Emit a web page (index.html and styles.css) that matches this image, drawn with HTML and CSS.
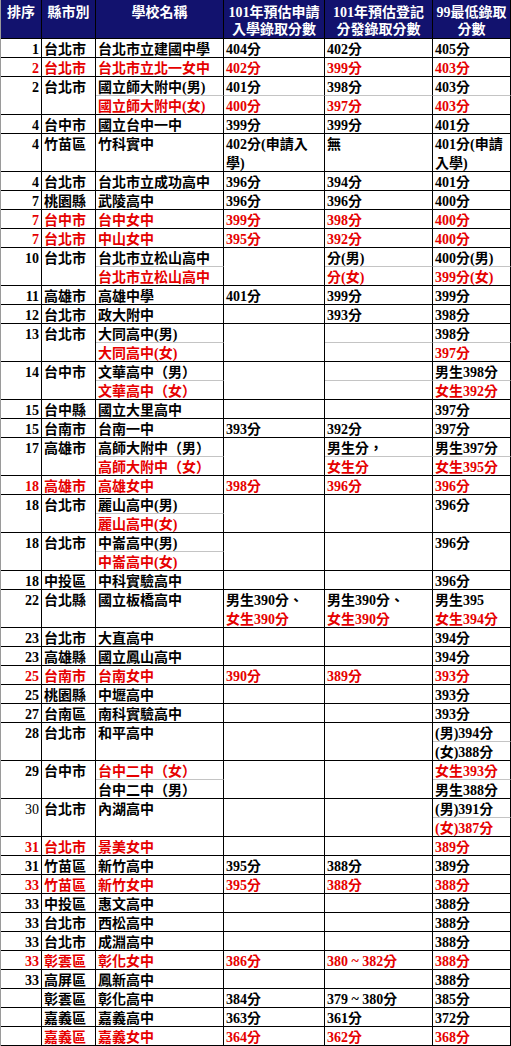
FILE: index.html
```html
<!DOCTYPE html>
<html lang="zh-Hant">
<head>
<meta charset="utf-8">
<title>高中錄取分數</title>
<link rel="stylesheet" href="styles.css">
</head>
<body>
<table class="sheet">
  <thead>
    <tr>
      <th class="c1">排序</th>
      <th class="c2">縣市別</th>
      <th class="c3">學校名稱</th>
      <th class="c4">101年預估申請<br>入學錄取分數</th>
      <th class="c5">101年預估登記<br>分發錄取分數</th>
      <th class="c6">99最低錄取<br>分數</th>
    </tr>
  </thead>
  <tbody>
    <tr><td class="n">1</td><td>台北市</td><td>台北市立建國中學</td><td>404分</td><td>402分</td><td>405分</td></tr>
    <tr class="r"><td class="n">2</td><td>台北市</td><td>台北市立北一女中</td><td>402分</td><td>399分</td><td>403分</td></tr>
    <tr><td class="n" rowspan="2">2</td><td rowspan="2">台北市</td><td class="g">國立師大附中(男)</td><td class="g">401分</td><td class="g">398分</td><td class="g">403分</td></tr>
    <tr class="r"><td>國立師大附中(女)</td><td>400分</td><td>397分</td><td>403分</td></tr>
    <tr><td class="n">4</td><td>台中市</td><td>國立台中一中</td><td>399分</td><td>399分</td><td>401分</td></tr>
    <tr><td class="n">4</td><td>竹苗區</td><td>竹科實中</td><td class="tall"><div>402分(申請入<br>學)</div></td><td>無</td><td class="tall"><div>401分(申請<br>入學)</div></td></tr>
    <tr><td class="n">4</td><td>台北市</td><td>台北市立成功高中</td><td>396分</td><td>394分</td><td>401分</td></tr>
    <tr><td class="n">7</td><td>桃園縣</td><td>武陵高中</td><td>396分</td><td>396分</td><td>400分</td></tr>
    <tr class="r"><td class="n">7</td><td>台中市</td><td>台中女中</td><td>399分</td><td>398分</td><td>400分</td></tr>
    <tr class="r"><td class="n">7</td><td>台北市</td><td>中山女中</td><td>395分</td><td>392分</td><td>400分</td></tr>
    <tr><td class="n" rowspan="2">10</td><td rowspan="2">台北市</td><td class="g">台北市立松山高中</td><td rowspan="2"></td><td class="g">分(男)</td><td class="g">400分(男)</td></tr>
    <tr class="r"><td>台北市立松山高中</td><td>分(女)</td><td>399分(女)</td></tr>
    <tr><td class="n">11</td><td>高雄市</td><td>高雄中學</td><td>401分</td><td>399分</td><td>399分</td></tr>
    <tr><td class="n">12</td><td>台北市</td><td>政大附中</td><td></td><td>393分</td><td>398分</td></tr>
    <tr><td class="n" rowspan="2">13</td><td rowspan="2">台北市</td><td class="g">大同高中(男)</td><td rowspan="2"></td><td class="g"></td><td class="g">398分</td></tr>
    <tr class="r"><td>大同高中(女)</td><td></td><td>397分</td></tr>
    <tr><td class="n" rowspan="2">14</td><td rowspan="2">台中市</td><td class="g">文華高中（男）</td><td rowspan="2"></td><td class="g"></td><td class="g">男生398分</td></tr>
    <tr class="r"><td>文華高中（女）</td><td></td><td>女生392分</td></tr>
    <tr><td class="n">15</td><td>台中縣</td><td>國立大里高中</td><td></td><td></td><td>397分</td></tr>
    <tr><td class="n">15</td><td>台南市</td><td>台南一中</td><td>393分</td><td>392分</td><td>397分</td></tr>
    <tr><td class="n" rowspan="2">17</td><td rowspan="2">高雄市</td><td class="g">高師大附中（男）</td><td rowspan="2"></td><td class="g">男生分，</td><td class="g">男生397分</td></tr>
    <tr class="r"><td>高師大附中（女）</td><td>女生分</td><td>女生395分</td></tr>
    <tr class="r"><td class="n">18</td><td>高雄市</td><td>高雄女中</td><td>398分</td><td>396分</td><td>396分</td></tr>
    <tr><td class="n" rowspan="2">18</td><td rowspan="2">台北市</td><td class="g">麗山高中(男)</td><td rowspan="2"></td><td rowspan="2"></td><td rowspan="2">396分</td></tr>
    <tr class="r"><td>麗山高中(女)</td></tr>
    <tr><td class="n" rowspan="2">18</td><td rowspan="2">台北市</td><td class="g">中崙高中(男)</td><td rowspan="2"></td><td rowspan="2"></td><td rowspan="2">396分</td></tr>
    <tr class="r"><td>中崙高中(女)</td></tr>
    <tr><td class="n">18</td><td>中投區</td><td>中科實驗高中</td><td></td><td></td><td>396分</td></tr>
    <tr><td class="n">22</td><td>台北縣</td><td>國立板橋高中</td><td class="tall"><div>男生390分、<br><span class="r">女生390分</span></div></td><td class="tall"><div>男生390分、<br><span class="r">女生390分</span></div></td><td class="tall"><div>男生395<br><span class="r">女生394分</span></div></td></tr>
    <tr><td class="n">23</td><td>台北市</td><td>大直高中</td><td></td><td></td><td>394分</td></tr>
    <tr><td class="n">23</td><td>高雄縣</td><td>國立鳳山高中</td><td></td><td></td><td>394分</td></tr>
    <tr class="r"><td class="n">25</td><td>台南市</td><td>台南女中</td><td>390分</td><td>389分</td><td>393分</td></tr>
    <tr><td class="n">25</td><td>桃園縣</td><td>中壢高中</td><td></td><td></td><td>393分</td></tr>
    <tr><td class="n">27</td><td>台南區</td><td>南科實驗高中</td><td></td><td></td><td>393分</td></tr>
    <tr><td class="n" rowspan="2">28</td><td rowspan="2">台北市</td><td rowspan="2">和平高中</td><td rowspan="2"></td><td rowspan="2"></td><td class="g">(男)394分</td></tr>
    <tr><td>(女)388分</td></tr>
    <tr><td class="n" rowspan="2">29</td><td rowspan="2">台中市</td><td class="g r">台中二中（女）</td><td rowspan="2"></td><td rowspan="2"></td><td class="g r">女生393分</td></tr>
    <tr><td>台中二中（男）</td><td>男生388分</td></tr>
    <tr><td class="n lite" rowspan="2">30</td><td rowspan="2">台北市</td><td rowspan="2">內湖高中</td><td rowspan="2"></td><td rowspan="2"></td><td class="g">(男)391分</td></tr>
    <tr><td class="r">(女)387分</td></tr>
    <tr class="r"><td class="n">31</td><td>台北市</td><td>景美女中</td><td></td><td></td><td>389分</td></tr>
    <tr><td class="n">31</td><td>竹苗區</td><td>新竹高中</td><td>395分</td><td>388分</td><td>389分</td></tr>
    <tr class="r"><td class="n">33</td><td>竹苗區</td><td>新竹女中</td><td>395分</td><td>388分</td><td>388分</td></tr>
    <tr><td class="n">33</td><td>中投區</td><td>惠文高中</td><td></td><td></td><td>388分</td></tr>
    <tr><td class="n">33</td><td>台北市</td><td>西松高中</td><td></td><td></td><td>388分</td></tr>
    <tr><td class="n">33</td><td>台北市</td><td>成淵高中</td><td></td><td></td><td>388分</td></tr>
    <tr class="r"><td class="n">33</td><td>彰雲區</td><td>彰化女中</td><td>386分</td><td>380 ~ 382分</td><td>388分</td></tr>
    <tr><td class="n">33</td><td>高屏區</td><td>鳳新高中</td><td></td><td></td><td>388分</td></tr>
    <tr><td class="n"></td><td>彰雲區</td><td>彰化高中</td><td>384分</td><td>379 ~ 380分</td><td>385分</td></tr>
    <tr><td class="n"></td><td>嘉義區</td><td>嘉義高中</td><td>363分</td><td>361分</td><td>372分</td></tr>
    <tr class="r"><td class="n"></td><td>嘉義區</td><td>嘉義女中</td><td>364分</td><td>362分</td><td>368分</td></tr>
  </tbody>
</table>
</body>
</html>
```

FILE: styles.css
```css
html, body {
  margin: 0;
  padding: 0;
  background: #ffffff;
}

.sheet {
  width: 511px;
  table-layout: fixed;
  border-collapse: separate;
  border-spacing: 0;
  border-left: 1px solid #9a9a9a;
  font-family: "Liberation Serif", "Noto Sans CJK TC", serif;
  font-size: 14px;
  font-weight: bold;
  color: #000000;
}

.sheet th,
.sheet td {
  box-sizing: border-box;
  border-right: 1px solid #000000;
  border-bottom: 1px solid #000000;
  padding: 3px 0 0 2px;
  line-height: 15px;
  text-align: left;
  vertical-align: top;
  white-space: nowrap;
  overflow: hidden;
}

.sheet th {
  background: #12126e;
  color: #ffffff;
  text-align: center;
  padding: 4px 1px 0;
  line-height: 17px;
}

.c1 { width: 41px; }
.c2 { width: 54px; }
.c3 { width: 128px; }
.c4 { width: 101px; }
.c5 { width: 108px; }
.c6 { width: 78px; }

.sheet td.n {
  text-align: right;
  padding-left: 0;
  padding-right: 2px;
}

.sheet td.lite {
  font-weight: normal;
}

.sheet td.g {
  border-bottom-color: #c4c4c4;
}

.sheet td.tall {
  padding-top: 1px;
}

.sheet td.tall > div {
  height: 36px;
  line-height: 19px;
}

.r {
  color: #e60000;
}
```
